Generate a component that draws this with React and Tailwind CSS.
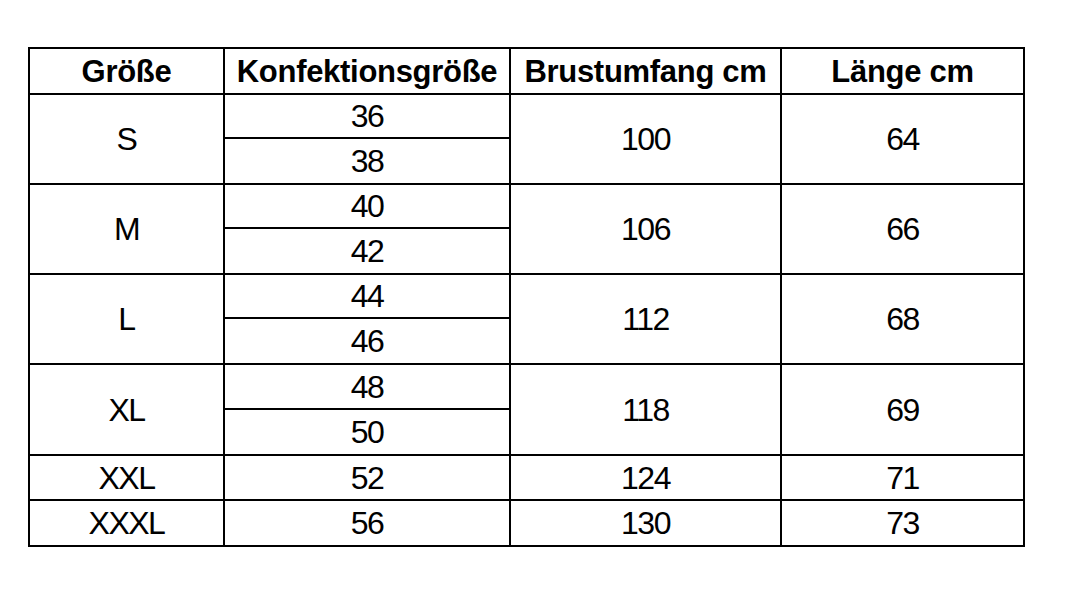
import React from "react";

const groups = [
  { size: "S", konf: ["36", "38"], brust: "100", laenge: "64" },
  { size: "M", konf: ["40", "42"], brust: "106", laenge: "66" },
  { size: "L", konf: ["44", "46"], brust: "112", laenge: "68" },
  { size: "XL", konf: ["48", "50"], brust: "118", laenge: "69" },
  { size: "XXL", konf: ["52"], brust: "124", laenge: "71" },
  { size: "XXXL", konf: ["56"], brust: "130", laenge: "73" },
];

function Cell({ children, bold, span }) {
  return (
    <div
      className={
        "bg-white flex items-center justify-center text-black leading-none " +
        (bold ? "font-bold text-[31px] tracking-[-0.3px] " : "text-[32px] tracking-[-1.5px] ") +
        (span === 2 ? "row-span-2" : "")
      }
    >
      {children}
    </div>
  );
}

export default function App() {
  return (
    <div
      className="w-[1074px] h-[608px] bg-white pt-[47px] pl-[28px]"
      style={{ fontFamily: '"Liberation Sans", Arial, sans-serif' }}
    >
      <div className="inline-grid bg-black p-[2px] gap-[2px] grid-cols-[193px_284px_269px_241px] grid-rows-[44px_42px_44px_42px_44px_42px_44px_43px_44px_43px_44px]">
        <Cell bold>Größe</Cell>
        <Cell bold>Konfektionsgröße</Cell>
        <Cell bold>Brustumfang cm</Cell>
        <Cell bold>Länge cm</Cell>
        {groups.map((g) => {
          const span = g.konf.length;
          return (
            <React.Fragment key={g.size}>
              <Cell span={span}>{g.size}</Cell>
              <Cell>{g.konf[0]}</Cell>
              <Cell span={span}>{g.brust}</Cell>
              <Cell span={span}>{g.laenge}</Cell>
              {span === 2 && <Cell>{g.konf[1]}</Cell>}
            </React.Fragment>
          );
        })}
      </div>
    </div>
  );
}
